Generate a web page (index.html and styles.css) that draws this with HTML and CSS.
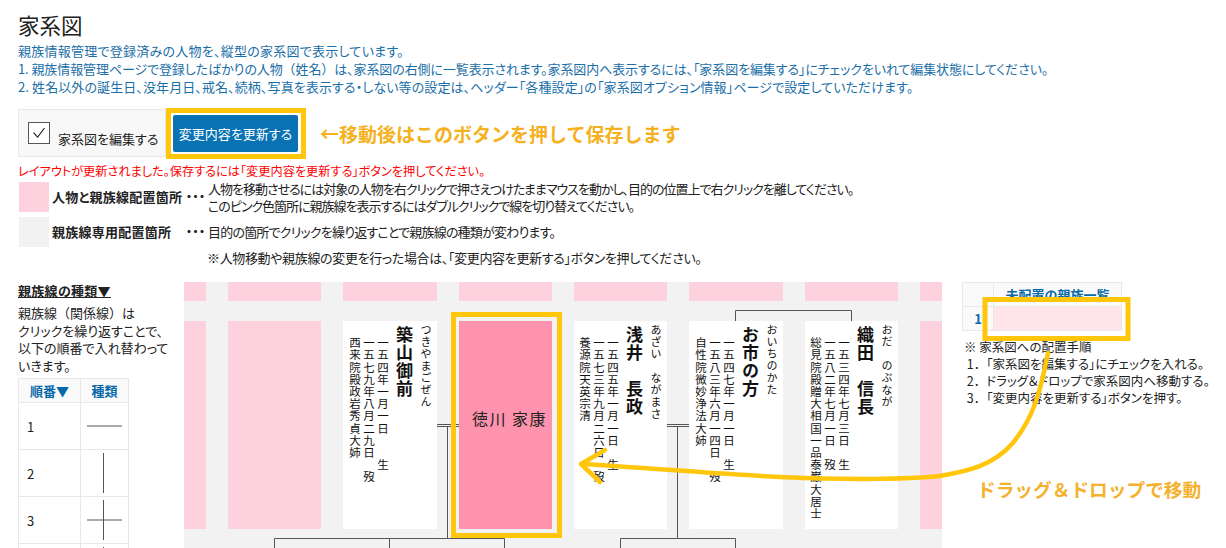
FILE: index.html
```html
<!DOCTYPE html>
<html lang="ja">
<head>
<meta charset="utf-8">
<title>家系図</title>
<link rel="stylesheet" href="styles.css">
</head>
<body>
<main class="page">
  <h1 class="title">家系図</h1>
  <div class="intro">
    <p class="loose">親族情報管理で登録済みの人物を、縦型の家系図で表示しています。</p>
    <p class="tight">1. 親族情報管理ページで登録したばかりの人物<span class="wide">（姓名）</span>は、家系図の右側に一覧表示されます。家系図内へ表示するには、「家系図を編集する」にチェックをいれて編集状態にしてください。</p>
    <p class="airy">2. 姓名以外の誕生日、没年月日、戒名、続柄、写真を表示する・しない等の設定は、ヘッダー「各種設定」の「家系図オプション情報」ページで設定していただけます。</p>
  </div>
  <div class="toolbar">
    <label class="edit-box">
      <span class="checkbox"><svg viewBox="0 0 22 22" width="20" height="20"><path d="M5 10.5 L9.5 15.5 L17 5.5" fill="none" stroke="#222" stroke-width="1.3"/></svg></span>
      <span class="edit-label">家系図を編集する</span>
    </label>
    <button class="save" type="button">変更内容を更新する</button>
    <span class="hint">←移動後はこのボタンを押して保存します</span>
  </div>
  <p class="notice">レイアウトが更新されました。保存するには「変更内容を更新する」ボタンを押してください。</p>
  <div class="legend">
    <div class="legend-row">
      <span class="swatch swatch-pink"></span>
      <b class="legend-name">人物と親族線配置箇所</b>
      <span class="dots">・・・</span>
      <div class="legend-text"><p class="narrow">人物を移動させるには対象の人物を右クリックで押さえつけたままマウスを動かし、目的の位置上で右クリックを離してください。</p><p class="narrow">このピンク色箇所に親族線を表示するにはダブルクリックで線を切り替えてください。</p></div>
    </div>
    <div class="legend-row">
      <span class="swatch swatch-gray"></span>
      <b class="legend-name">親族線専用配置箇所</b>
      <span class="dots">・・・</span>
      <div class="legend-text"><p class="narrower">目的の箇所でクリックを繰り返すことで親族線の種類が変わります。</p></div>
    </div>
    <p class="legend-note">※人物移動や親族線の変更を行った場合は、「変更内容を更新する」ボタンを押してください。</p>
  </div>
  <div class="workspace">
    <aside class="side">
      <h2 class="side-title">親族線の種類▼</h2>
      <p class="side-text">親族線<span class="wide">（関係線）</span>は<br>クリックを繰り返すことで、<br>以下の順番で入れ替わって<br>いきます。</p>
      <table class="types">
        <thead><tr><th>順番▼</th><th>種類</th></tr></thead>
        <tbody>
          <tr><td>1</td><td><svg class="line-icon" viewBox="0 0 35 40"><path d="M0 20H35"/></svg></td></tr>
          <tr><td>2</td><td><svg class="line-icon" viewBox="0 0 35 40"><path d="M16.5 0V40"/></svg></td></tr>
          <tr><td>3</td><td><svg class="line-icon" viewBox="0 0 35 40"><path d="M0 20H35M16.5 0V40"/></svg></td></tr>
          <tr><td></td><td><svg class="line-icon" viewBox="0 0 35 40"><path d="M16.5 0V20H35"/></svg></td></tr>
        </tbody>
      </table>
    </aside>
    <section class="chart">
      <i class="pink"></i><i></i><i class="pink"></i><i></i><i class="pink"></i><i></i><i class="pink"></i><i></i><i class="pink"></i><i></i><i class="pink"></i><i></i><i class="pink"></i><i></i><i class="pink"></i>
      <i class="spacer"></i>
      <i class="pink"></i><i></i><i class="pink"></i><i></i>
      <article class="card">
        <div class="kana">つきやまごぜん</div>
        <div class="name">築山御前</div>
        <div class="line">一五四年一月一日　　生</div>
        <div class="line">一五七九年八月二九日　歿</div>
        <div class="line">西来院殿政岩秀貞大姉</div>
      </article>
      <i></i>
      <div class="moving">徳川 家康</div>
      <i></i>
      <article class="card">
        <div class="kana">あざい　ながまさ</div>
        <div class="name">浅井　長政</div>
        <div class="line">一五四五年一月一日　生</div>
        <div class="line">一五七三年九月二六日　歿</div>
        <div class="line">養源院天英宗清</div>
      </article>
      <i></i>
      <article class="card">
        <div class="kana">おいちのかた</div>
        <div class="name">お市の方</div>
        <div class="line">一五四七年一月一日　生</div>
        <div class="line">一五八三年六月一四日　歿</div>
        <div class="line">自性院微妙浄法大姉</div>
      </article>
      <i></i>
      <article class="card">
        <div class="kana">おだ　のぶなが</div>
        <div class="name">織田　信長</div>
        <div class="line">一五三四年七月三日　生</div>
        <div class="line">一五八二年七月一日　歿</div>
        <div class="line">総見院殿贈大相国一品泰巌大居士</div>
      </article>
      <i></i>
      <i class="pink"></i>
      <i class="spacer"></i>
      <svg class="chart-lines" viewBox="184 282 758 266" width="758" height="266">
        <path d="M735.5 321V310.5H851.5V321"/>
        <path d="M437 424.5H459M437 426.5H459M447.5 426.5V538.5"/>
        <path d="M667 424.5H689M667 426.5H689M677.5 426.5V538.5"/>
        <path d="M274.5 548V538.5H504.5V548M389.5 538.5V548"/>
        <path d="M620.5 548V538.5H735.5V548"/>
      </svg>
    </section>
    <aside class="unplaced">
      <table class="unplaced-table">
        <thead><tr><th></th><th>未配置の親族一覧</th></tr></thead>
        <tbody><tr><th>1</th><td class="unplaced-cell"></td></tr></tbody>
      </table>
      <div class="steps">
        <p>※ 家系図への配置手順</p>
        <p><span class="wide">&nbsp;1．</span>「家系図を編集する」にチェックを入れる。</p>
        <p><span class="wide">&nbsp;2．</span>ドラッグ＆ドロップで家系図内へ移動する。</p>
        <p><span class="wide">&nbsp;3．</span>「変更内容を更新する」ボタンを押す。</p>
      </div>
    </aside>
  </div>
</main>
<div class="drag-label">ドラッグ＆ドロップで移動</div>
<svg class="annotations" viewBox="0 0 1226 548" width="1226" height="548">
  <rect x="168.5" y="110.5" width="135" height="46"/>
  <rect x="453.5" y="314.5" width="106" height="221"/>
  <rect x="985" y="299.5" width="143" height="39"/>
  <path d="M1048 353C1040 395 1032 420 1012 444C992 466 968 471 940 476C900 480 850 479 803 478C740 476 680 470 582 464"/>
  <path d="M605 450L581 464L600 482"/>
</svg>
</body>
</html>
```
FILE: styles.css
```css
* { box-sizing: border-box; }
html, body { margin: 0; padding: 0; height: 548px; overflow: hidden; background: #fff; }
body { position: relative; font-family: "Noto Sans CJK JP", "Noto Sans", sans-serif; font-size: 13px; color: #222; font-feature-settings: "palt"; }
p { margin: 0; }
.wide { font-feature-settings: normal; }
.tight { letter-spacing: -0.1px; }
.loose { letter-spacing: 0.25px; }
.airy { letter-spacing: 0.1px; }
.narrow { letter-spacing: -1px; }
.narrower { letter-spacing: -0.8px; }
.page { padding: 12px 0 0 18px; width: 1226px; }
.title { margin: 0; font-size: 21.5px; font-weight: 400; line-height: 26px; color: #222; }
.intro { margin-top: 4px; color: #1a6fa8; line-height: 18px; }
.toolbar { display: flex; align-items: stretch; margin-top: 13px; height: 48px; }
.edit-box { display: flex; width: 148px; background: #f8f8f8; border: 1px solid #e8e8e8; padding: 12px 0 0 9px; }
.checkbox { display: flex; align-items: center; justify-content: center; width: 22px; height: 22px; border: 1px solid #555; background: #fff; }
.edit-label { margin: 8px 0 0 8px; line-height: 18px; }
.save { align-self: center; margin: 0 0 0 7px; width: 125px; height: 37px; background: #0872b4; color: #fff; border: 0; border-radius: 2px; font: inherit; padding: 0; }
.hint { align-self: center; margin-left: 22px; font-size: 19px; font-weight: 700; color: #f5b120; font-feature-settings: normal; }
.notice { margin-top: 5px; color: #f00; line-height: 18px; font-size: 12.2px; }
.legend { margin-top: -1px; }
.legend-row { display: flex; align-items: center; height: 35px; }
.swatch { flex: none; width: 30px; height: 30px; margin-left: 1px; }
.swatch-pink { background: #fdd2de; }
.swatch-gray { background: #f2f2f2; }
.legend-name { width: 134px; margin-left: 3px; white-space: nowrap; letter-spacing: 0.25px; }
.dots { width: 21px; font-weight: 700; font-size: 12px; letter-spacing: -5.5px; margin-left: -3px; margin-right: 3px; font-feature-settings: normal; }
.legend-text { line-height: 17px; margin-left: 1px; }
.legend-note { margin: 0 0 0 189px; line-height: 18px; letter-spacing: -0.35px; }
.workspace { display: flex; margin-top: 15px; }
.side { width: 166px; flex: none; }
.side-title { margin: 0; font-size: 13px; font-weight: 700; text-decoration: underline; line-height: 18px; letter-spacing: 0.3px; }
.side-text { margin-top: 4px; line-height: 17.5px; }
.types { margin-top: 4px; border-collapse: collapse; width: 111px; table-layout: fixed; }
.types th, .types td { border: 1px solid #e8e8e8; padding: 0; }
.types th { height: 24px; color: #0868a8; background: #fafafa; font-weight: 700; }
.types th:first-child, .types td:first-child { width: 62px; }
.types td { height: 47px; }
.types td:first-child { padding-left: 8px; }
.types td svg { display: block; margin: 0 auto; }
.line-icon { width: 35px; height: 40px; }
.line-icon path { fill: none; stroke: #555; stroke-width: 1; }
.chart { position: relative; flex: none; width: 758px; height: 290px; background: #f2f2f2; display: grid; grid-template-columns: 22px 22px 93px 22px 94px 22px 93px 22px 93px 22px 94px 22px 93px 22px 22px; grid-template-rows: 19px 20px 208px 43px; overflow: hidden; }
.spacer { grid-column: 1 / -1; }
.pink { background: #fdd2de; }
.card { background: #fff; writing-mode: vertical-rl; padding: 3px 3px 0 0; font-family: "Noto Sans CJK JP", serif; color: #111; font-feature-settings: normal; }
.kana { font-size: 11px; line-height: 16px; letter-spacing: 1px; }
.name { font-size: 17px; font-weight: 700; line-height: 28px; padding-top: 2px; letter-spacing: 1px; }
.line { font-size: 11.5px; line-height: 14px; padding-top: 13px; letter-spacing: 0.7px; }
.moving { background: #ff93ae; display: flex; align-items: center; justify-content: center; font-size: 16px; letter-spacing: 1.5px; color: #222; padding: 0 0 14px 8px; }
.chart-lines { position: absolute; left: 0; top: 0; }
.chart-lines path { fill: none; stroke: #555; stroke-width: 1; }
.unplaced { margin-left: 20px; width: 250px; flex: none; }
.unplaced-table { border-collapse: collapse; width: 160px; table-layout: fixed; }
.unplaced-table th, .unplaced-table td { border: 1px solid #e8e8e8; padding: 0; height: 24px; }
.unplaced-table th { color: #0868a8; background: #fafafa; font-weight: 700; }
.unplaced-table th:first-child { width: 31px; }
.unplaced-cell { background: #ffe4ea; }
.steps { margin-top: 7px; margin-left: 2px; line-height: 17px; white-space: nowrap; font-size: 12.5px; }
.drag-label { position: absolute; left: 977px; top: 477px; font-size: 18.7px; font-weight: 700; line-height: 24px; color: #f5b12d; font-feature-settings: normal; }
.annotations { position: absolute; left: 0; top: 0; pointer-events: none; }
.annotations rect { fill: none; stroke: #ffc60b; stroke-width: 5; }
.annotations path { fill: none; stroke: #ffc60b; stroke-width: 4.5; stroke-linecap: round; stroke-linejoin: round; }
```
